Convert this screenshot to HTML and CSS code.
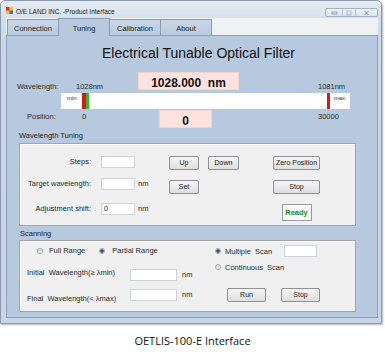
FILE: index.html
```html
<!DOCTYPE html>
<html>
<head>
<meta charset="utf-8">
<title>OETLIS-100-E Interface</title>
<link rel="stylesheet" href="styles.css">
</head>
<body>
<div class="window">
  <div class="titlebar">
    <svg class="app-icon" width="7" height="7" viewBox="0 0 7 7">
      <rect x="0" y="0" width="7" height="7" fill="#f2c230"/>
      <rect x="0" y="0" width="3.5" height="3.5" fill="#e0302a"/>
      <rect x="3.5" y="3.5" width="3.5" height="3.5" fill="#3a6fc4"/>
    </svg>
    <span class="title-text">O/E LAND INC. -Product Interface</span>
    <div class="controls">
      <span class="ctl ctl-min"><svg width="7" height="5" viewBox="0 0 7 5"><rect x="1" y="2" width="5" height="2" fill="none" stroke="#8797ab" stroke-width="0.8"/></svg></span>
      <span class="ctl ctl-max"><svg width="6" height="6" viewBox="0 0 6 6"><rect x="1" y="1" width="4" height="4" fill="none" stroke="#a3b0c0" stroke-width="0.8"/></svg></span>
      <span class="ctl ctl-close"><svg width="7" height="6" viewBox="0 0 7 6"><path d="M1.5 1 L5.5 5 M5.5 1 L1.5 5" stroke="#8797ab" stroke-width="1"/></svg></span>
    </div>
  </div>
  <div class="client">
    <div class="tabs">
      <div class="tab">Connection</div>
      <div class="tab active">Tuning</div>
      <div class="tab">Calibration</div>
      <div class="tab">About</div>
    </div>
    <div class="page">
      <h1 class="heading">Electrical Tunable Optical Filter</h1>

      <div class="wl-row">
        <span class="lbl w-label">Wavelength:</span>
        <span class="lbl w-min">1028nm</span>
        <div class="readout">1028.000&nbsp;&nbsp;nm</div>
        <span class="lbl w-max">1081nm</span>
      </div>

      <div class="slider">
        <span class="sl-text sl-min">min</span>
        <span class="mark-red"></span>
        <span class="mark-green"></span>
        <span class="mark-end"></span>
        <span class="sl-text sl-max">max</span>
      </div>

      <div class="pos-row">
        <span class="lbl p-label">Position:</span>
        <span class="lbl p-val">0</span>
        <div class="readout readout-small">0</div>
        <span class="lbl p-max">30000</span>
      </div>

      <div class="section-label">Wavelength Tuning</div>
      <div class="group group-tuning">
        <div class="tuning">
          <span class="f-label r1">Steps:</span>
          <span class="input r1 c2"></span>
          <span class="btn r1 c4 w30">Up</span>
          <span class="btn r1 c5 w31">Down</span>
          <span class="btn r1 c6 w47">Zero Position</span>

          <span class="f-label r2">Target wavelength:</span>
          <span class="input r2 c2"></span>
          <span class="unit r2 c3">nm</span>
          <span class="btn r2 c4 w30 end">Set</span>
          <span class="btn r2 c6 w47 end">Stop</span>

          <span class="f-label r3 nudge">Adjustment shift:</span>
          <span class="input r3 c2 nudge">0</span>
          <span class="unit r3 c3 nudge">nm</span>
          <span class="ready r3 c6">Ready</span>
        </div>
      </div>

      <div class="section-label scan-label">Scanning</div>
      <div class="group group-scan">
        <div class="scan">
          <div class="scan-left">
            <div class="radio-row">
              <span class="radio r-full"></span>
              <span class="lbl radio-text">Full Range</span>
              <span class="radio checked r-partial"></span>
              <span class="lbl radio-text partial-text">Partial Range</span>
            </div>
            <div class="range-row row-initial">
              <span class="lbl range-label">Initial  Wavelength(≥ λmin)</span>
              <span class="input wide"></span>
              <span class="unit range-unit">nm</span>
            </div>
            <div class="range-row row-final">
              <span class="lbl range-label final-label">Final  Wavelength(&lt; λmax)</span>
              <span class="input wide"></span>
              <span class="unit range-unit">nm</span>
            </div>
          </div>
          <div class="scan-right">
            <div class="mode-row">
              <span class="radio checked"></span>
              <span class="lbl mode-text">Multiple  Scan</span>
              <span class="input narrow"></span>
            </div>
            <div class="mode-row mode-cont">
              <span class="radio"></span>
              <span class="lbl mode-text">Continuous  Scan</span>
            </div>
            <div class="run-row">
              <span class="btn w39">Run</span>
              <span class="btn w39">Stop</span>
            </div>
          </div>
        </div>
      </div>
    </div>
  </div>
</div>
<p class="caption">OETLIS-100-E Interface</p>
</body>
</html>
```

FILE: styles.css
```css
* { box-sizing: border-box; }

body {
  margin: 0;
  width: 385px;
  background: #ffffff;
  font-family: "Liberation Sans", Arial, sans-serif;
  color: #1e1e1e;
}

.window {
  width: 382px;
  height: 324px;
  border: 1px solid #8a99ad;
  border-radius: 5px 5px 0 0;
  background: linear-gradient(180deg, #e6ecf3 0, #d6e0ec 17px, #c8d7e9 40px, #c6d5e8 100%);
  padding: 0 3px 5px 5px;
  display: flex;
  flex-direction: column;
  box-shadow: 1px 1px 2px rgba(0, 0, 0, 0.3);
}

.titlebar {
  height: 17px;
  display: flex;
  align-items: flex-start;
}

.app-icon {
  margin-top: 6px;
  flex: none;
}

.title-text {
  font-size: 6.5px;
  line-height: 7px;
  margin: 7px 0 0 3px;
  color: #1a1a1a;
  white-space: nowrap;
}

.controls {
  margin-left: auto;
  margin-top: 7px;
  height: 9px;
  display: flex;
  border: 1px solid #a4b3c6;
  border-radius: 2px;
  background: linear-gradient(#eef2f7, #d9e2ee);
}

.ctl {
  display: flex;
  align-items: center;
  justify-content: center;
  height: 100%;
}

.ctl-min { width: 17px; border-right: 1px solid #b5c2d2; }
.ctl-max { width: 13px; border-right: 1px solid #b5c2d2; }
.ctl-close { width: 21px; }

.client {
  flex: 1;
  display: flex;
  flex-direction: column;
}

.tabs {
  height: 17px;
  display: flex;
  align-items: flex-end;
  background: #f0f1f3;
  padding-left: 1px;
}

.tab {
  width: 52px;
  height: 16px;
  margin-right: -1px;
  border: 1px solid #8c9bb0;
  border-bottom: none;
  background: linear-gradient(#c8d6e8, #b9cbe0);
  font-size: 7.5px;
  line-height: 13px;
  padding-top: 2px;
  text-align: center;
  color: #222;
}

.tab.active {
  height: 18px;
  margin-bottom: -1px;
  padding-top: 3px;
  background: #b7c9df;
  position: relative;
  z-index: 1;
}

.page {
  flex: 1;
  background: #b7c9df;
  border: 1px solid #8fa1b8;
  display: flex;
  flex-direction: column;
}

.heading {
  margin: 9px 0 0 95px;
  font-size: 14px;
  line-height: 16px;
  font-weight: normal;
  color: #111;
  white-space: nowrap;
}

.lbl {
  font-size: 7.5px;
  line-height: 9px;
  white-space: pre;
  color: #2a2a2a;
}

.wl-row {
  display: flex;
  align-items: flex-end;
  height: 18px;
  margin-top: 11px;
}

.wl-row .lbl { margin-bottom: -1px; }

.w-label { margin-left: 10px; width: 59px; }
.w-min { width: 62px; }
.w-max { margin-left: 79px; }

.readout {
  width: 101px;
  height: 18px;
  background: #fde2de;
  border: 1px solid #f2d4d0;
  font-size: 12px;
  font-weight: bold;
  line-height: 14px;
  padding-top: 3px;
  text-align: center;
  color: #111;
  white-space: nowrap;
}

.readout-small { width: 53px; }

.slider {
  margin: 3px 0 0 54px;
  width: 289px;
  height: 16px;
  background: #ffffff;
  display: flex;
}

.sl-text {
  font-size: 6px;
  line-height: 7px;
  padding-top: 2px;
  color: #333;
}

.sl-min { margin-left: 6px; }

.mark-red { width: 4px; margin-left: 5px; background: #e3131b; }
.mark-green { width: 3px; background: #1fc21f; }
.mark-end { width: 3px; margin-left: auto; background: #e3131b; }
.sl-max { margin: 0 5px 0 4px; }

.pos-row {
  display: flex;
  align-items: flex-start;
  height: 18px;
  margin-top: 1px;
}

.pos-row .lbl { margin-top: 2px; }
.p-label { margin-left: 20px; width: 55px; }
.p-val { width: 77px; }
.p-max { margin-left: 106px; }

.section-label {
  font-size: 7.5px;
  line-height: 9px;
  margin: 3px 0 0 12px;
  color: #222;
}

.scan-label { margin-left: 13px; }

.group {
  margin: 3px 0 0 12px;
  width: 337px;
  background: #f0f0f0;
  border: 1px solid #a2a6ab;
  box-shadow: inset 1px 1px 0 #ffffff;
}

.group-scan {
  margin-top: 2px;
  height: 72px;
}

.tuning {
  display: grid;
  grid-template-columns: 81px 34px 34px 39px 65px 47px;
  grid-template-rows: 14px 16px 19px;
  row-gap: 8px;
  padding: 12px 0 4px 0;
}

.r1 { grid-row: 1; }
.r2 { grid-row: 2; }
.r3 { grid-row: 3; }
.c2 { grid-column: 2; }
.c3 { grid-column: 3; }
.c4 { grid-column: 4; }
.c5 { grid-column: 5; }
.c6 { grid-column: 6; }

.f-label {
  grid-column: 1;
  align-self: start;
  height: 12px;
  font-size: 7.5px;
  line-height: 12px;
  text-align: right;
  padding-right: 10px;
  color: #2a2a2a;
  white-space: nowrap;
}

.nudge { margin-top: 1px; }

.input {
  display: block;
  align-self: start;
  height: 12px;
  background: #ffffff;
  border: 1px solid #cfd2d6;
  font-size: 7.5px;
  line-height: 10px;
  padding-left: 2px;
  color: #222;
}

.tuning .input { width: 34px; }

.unit {
  align-self: start;
  font-size: 7.5px;
  line-height: 12px;
  padding-left: 3px;
  color: #2a2a2a;
}

.btn {
  display: block;
  height: 14px;
  justify-self: start;
  border: 1px solid #8e9296;
  border-radius: 2px;
  background: linear-gradient(#f6f6f6, #dedede);
  font-size: 7px;
  line-height: 12px;
  text-align: center;
  color: #222;
  white-space: nowrap;
}

.btn.end { align-self: end; }

.w30 { width: 30px; }
.w31 { width: 31px; }
.w39 { width: 39px; }
.w47 { width: 47px; }

.ready {
  justify-self: center;
  align-self: end;
  width: 30px;
  height: 17px;
  border: 1px solid #9a9a9a;
  box-shadow: inset 0 0 0 1px #ffffff;
  background: #f6f6f6;
  color: #1b8f1b;
  font-weight: bold;
  font-size: 7.5px;
  line-height: 15px;
  text-align: center;
}

.scan {
  display: grid;
  grid-template-columns: 192px 1fr;
}

.scan-left,
.scan-right {
  padding-top: 4px;
  display: flex;
  flex-direction: column;
}

.radio-row {
  display: flex;
  align-items: center;
  height: 11px;
}

.radio {
  flex: none;
  width: 6px;
  height: 6px;
  border-radius: 50%;
  border: 1px solid #a3a6aa;
  background: linear-gradient(#d8d8d8, #f6f6f6);
}

.radio.checked {
  background: radial-gradient(circle, #24558c 0, #24558c 1.4px, #dcdfe3 2.2px);
}

.r-full { margin-left: 17px; }
.radio-text { margin-left: 6px; }
.r-partial { margin-left: 14px; }
.partial-text { margin-left: 7px; }

.range-row {
  display: flex;
  align-items: flex-start;
  height: 12px;
}

.row-initial { margin-top: 13px; }
.row-final { margin-top: 8px; }

.range-label {
  margin-left: 7px;
  width: 103px;
  line-height: 8px;
}

.final-label { margin-top: 6px; }

.input.wide { width: 47px; }
.input.narrow { width: 33px; }

.range-unit { padding-left: 5px; }

.mode-row {
  display: flex;
  align-items: center;
  height: 12px;
}

.mode-row .radio { margin-left: 3px; }
.mode-row .input { align-self: auto; }

.mode-text {
  margin-left: 4px;
  width: 59px;
}

.mode-cont { margin-top: 4px; }

.run-row {
  display: flex;
  margin-top: 15px;
}

.run-row .btn { margin-left: 15px; }

.caption {
  margin: 10px 0 0 0;
  font-family: "Open Sans", "Liberation Sans", sans-serif;
  font-size: 11px;
  line-height: 14px;
  text-align: center;
  color: #111;
}
```
